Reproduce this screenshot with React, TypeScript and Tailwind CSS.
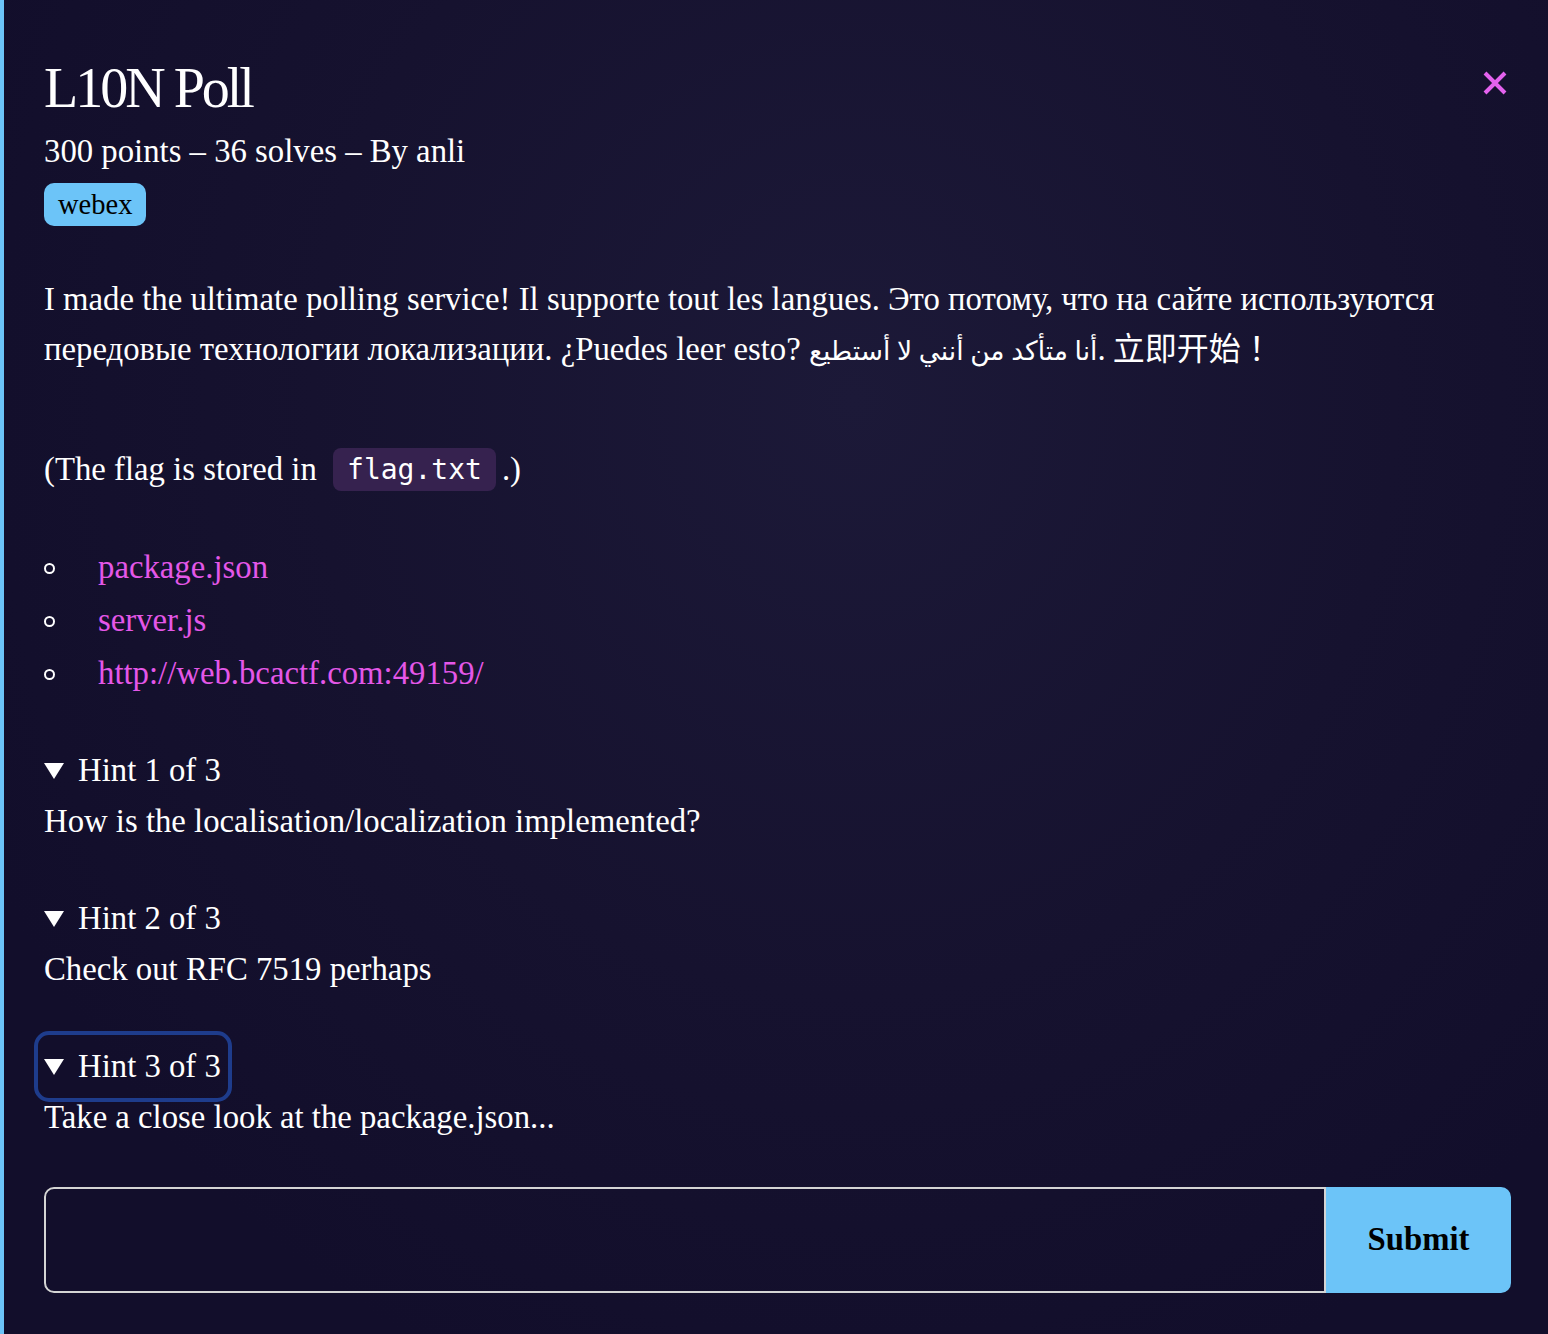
import React from 'react';

const serif = "font-['Liberation_Serif','Noto_Sans_CJK_SC','DejaVu_Sans',serif]";

const links = ['package.json', 'server.js', 'http://web.bcactf.com:49159/'];

const hints = [
  { title: 'Hint 1 of 3', text: 'How is the localisation/localization implemented?' },
  { title: 'Hint 2 of 3', text: 'Check out RFC 7519 perhaps' },
  { title: 'Hint 3 of 3', text: 'Take a close look at the package.json...', focused: true },
];

const Triangle = () => (
  <svg width="20" height="16" viewBox="0 0 20 16" className="mr-[14px] mt-[1px] shrink-0">
    <path d="M0 0 H20 L10 16 Z" fill="white" />
  </svg>
);

const App = () => {
  return (
    <div
      className={`min-h-screen w-full border-l-4 border-[#6cc4f8] bg-[#14102e] bg-[radial-gradient(ellipse_at_55%_30%,#1c1938_0%,#16122f_45%,#120e2b_80%)] pl-[40px] pr-[37px] pt-[56px] pb-[41px] text-white ${serif}`}
    >
      <div className="flex items-start justify-between">
        <h1 className="text-[56px] leading-[64px] tracking-[-3px]">L10N Poll</h1>
        <button className="mt-[15px] mr-[4px] text-[#e462ee]">
          <svg width="24" height="24" viewBox="0 0 24 24">
            <path d="M2 2 L22 22 M22 2 L2 22" stroke="currentColor" strokeWidth="4" />
          </svg>
        </button>
      </div>

      <p className="mt-[6px] text-[32.75px] leading-[50px]">300 points – 36 solves – By anli</p>

      <span className="mt-[7px] inline-block h-[43px] rounded-[10px] bg-[#6cc4f8] px-[14px] text-[28.5px] leading-[43px] text-black">
        webex
      </span>

      <div className="mt-[48px] text-[32.75px] leading-[50px]">
        <p>
          I made the ultimate polling service! Il supporte tout les langues. Это потому, что на сайте используются
          передовые технологии локализации. ¿Puedes leer esto?{' '}
          <span className="text-[26.5px] leading-[40px]">أنا متأكد من أنني لا أستطيع</span>.{' '}
          <span className="ml-[-1px] font-['Noto_Sans_CJK_TC',sans-serif] text-[32px] leading-[40px]">立即开始！</span>
        </p>

        <p className="mt-[70px] flex h-[50px] items-center whitespace-pre">
          <span>(The flag is stored in </span>
          <code className="ml-[8px] mr-[6px] h-[43px] rounded-[8px] bg-[#36224f] px-[14px] font-['DejaVu_Sans_Mono',monospace] text-[28px] leading-[43px]">
            flag.txt
          </code>
          <span>.)</span>
        </p>

        <ul className="mt-[46px]">
          {links.map((l) => (
            <li key={l} className="flex h-[53.3px] items-center">
              <span className="mt-[3px] h-[11px] w-[11px] rounded-full border-2 border-white" />
              <a href="#" className="ml-[43px] text-[#e457e8]">
                {l}
              </a>
            </li>
          ))}
        </ul>

        <div className="mt-[45px] flex flex-col gap-[47.3px]">
          {hints.map((h) => (
            <div key={h.title}>
              <div
                className={`flex h-[50.7px] w-fit items-center pr-[1px] ${
                  h.focused ? 'rounded-[5px] outline-4 outline-offset-[6px] outline-[#1e3c8c]' : ''
                }`}
              >
                <Triangle />
                <span>{h.title}</span>
              </div>
              <p>{h.text}</p>
            </div>
          ))}
        </div>
      </div>

      <div className="mt-[45px] flex h-[106px]">
        <input
          className="h-full flex-1 rounded-l-[10px] border-2 border-[#d4d4d4] bg-transparent px-4 text-[32px] text-white outline-none"
          aria-label="flag"
        />
        <button className="h-full w-[185px] rounded-r-[10px] bg-[#6cc4f8] text-[32.75px] font-bold text-black">
          Submit
        </button>
      </div>
    </div>
  );
};

export default App;
